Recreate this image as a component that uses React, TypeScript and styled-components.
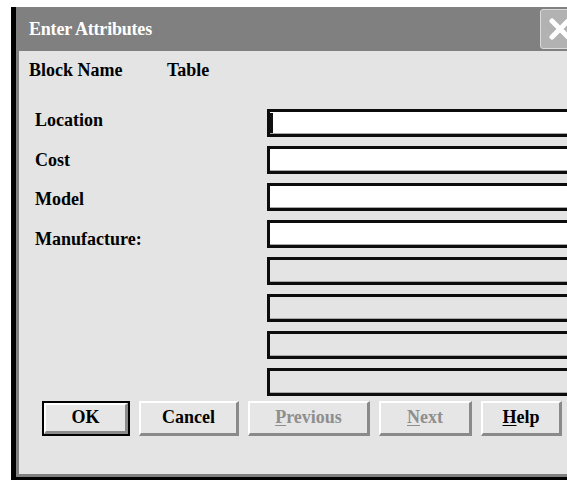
import React from "react";
import styled, { createGlobalStyle } from "styled-components";

const Global = createGlobalStyle`
  html, body {
    margin: 0;
    padding: 0;
    background: #ffffff;
    overflow: hidden;
  }
  body {
    font-family: "Liberation Serif", "Times New Roman", serif;
  }
`;

const Frame = styled.div`
  margin: 7px 0 0 11px;
  width: 600px;
  height: 473px;
  display: flex;
  flex-direction: column;
  border-left: 5px solid #000;
  border-bottom: 3px solid #000;
  box-sizing: border-box;
`;

const TitleBar = styled.div`
  height: 44px;
  flex: none;
  background: #808080;
  display: flex;
  align-items: center;
  justify-content: space-between;
  padding: 0 31px 0 13px;
`;

const TitleText = styled.span`
  color: #ffffff;
  font-weight: bold;
  font-size: 18px;
  line-height: 20px;
  letter-spacing: -0.2px;
`;

const CloseButton = styled.div`
  width: 40px;
  height: 40px;
  box-sizing: border-box;
  border: 1px solid #dadada;
  border-radius: 3px;
  background: #b2b2b2;
  display: flex;
  align-items: center;
  justify-content: center;
`;

const Body = styled.div`
  flex: 1;
  background: #e4e4e4;
  border-left: 3px solid #808080;
  border-bottom: 3px solid #808080;
  display: flex;
  flex-direction: column;
  padding: 9px 0 0 10px;
`;

const Text = styled.span`
  color: #000;
  font-weight: bold;
  font-size: 18px;
  line-height: 20px;
  white-space: nowrap;
`;

const BlockRow = styled.div`
  display: grid;
  grid-template-columns: 138px auto;
`;

const Form = styled.div`
  margin-top: 29px;
  display: grid;
  grid-template-columns: 238px 1fr;
`;

const Labels = styled.div`
  display: flex;
  flex-direction: column;
  gap: 19.6px;
  padding: 1px 0 0 6px;
`;

const Fields = styled.div`
  display: flex;
  flex-direction: column;
  gap: 9px;
`;

const Field = styled.div<{ $enabled: boolean }>`
  height: 28px;
  box-sizing: border-box;
  border: 3px solid #0c0c0c;
  box-shadow: inset 0 -1px 0 #a8a8a8;
  background: ${(p) => (p.$enabled ? "#ffffff" : "#e4e4e4")};
  display: flex;
  align-items: center;
`;

const Caret = styled.span`
  width: 3px;
  height: 20px;
  background: #111;
`;

const ButtonRow = styled.div`
  margin: 5px 0 0 13px;
  display: flex;
  gap: 9px;
`;

const Button = styled.div<{ $width: number; $default?: boolean; $disabled?: boolean }>`
  width: ${(p) => (p.$default ? p.$width - 4 : p.$width)}px;
  height: ${(p) => (p.$default ? 31 : 35)}px;
  margin: ${(p) => (p.$default ? "2px 2px 0 2px" : "0")};
  box-sizing: border-box;
  background: #e6e6e6;
  border-top: 2px solid #ffffff;
  border-left: 2px solid #ffffff;
  border-right: 3px solid #8a8a8a;
  border-bottom: 3px solid #8a8a8a;
  box-shadow: ${(p) => (p.$default ? "0 0 0 2px #000" : "none")};
  display: flex;
  align-items: center;
  justify-content: center;
  color: ${(p) => (p.$disabled ? "#8e8e8e" : "#000")};
  font-weight: bold;
  font-size: 18px;
  line-height: 20px;
  padding-bottom: 2px;
`;

const Key = styled.span`
  text-decoration: underline;
  text-underline-offset: 2px;
  text-decoration-thickness: 1px;
`;

const labels = ["Location", "Cost", "Model", "Manufacture:"];
const fieldCount = 8;

export default function App() {
  return (
    <>
      <Global />
      <Frame>
        <TitleBar>
          <TitleText>Enter Attributes</TitleText>
          <CloseButton>
            <svg width="24" height="24" viewBox="0 0 24 24">
              <path d="M4 4 L20 20 M20 4 L4 20" stroke="#ffffff" strokeWidth="5" strokeLinecap="round" />
            </svg>
          </CloseButton>
        </TitleBar>
        <Body>
          <BlockRow>
            <Text>Block Name</Text>
            <Text>Table</Text>
          </BlockRow>
          <Form>
            <Labels>
              {labels.map((l) => (
                <Text key={l}>{l}</Text>
              ))}
            </Labels>
            <Fields>
              {Array.from({ length: fieldCount }, (_, i) => (
                <Field key={i} $enabled={i < labels.length}>
                  {i === 0 && <Caret />}
                </Field>
              ))}
            </Fields>
          </Form>
          <ButtonRow>
            <Button $width={88} $default>OK</Button>
            <Button $width={100}>Cancel</Button>
            <Button $width={122} $disabled>
              <span><Key>P</Key>revious</span>
            </Button>
            <Button $width={93} $disabled>
              <span><Key>N</Key>ext</span>
            </Button>
            <Button $width={81}>
              <span><Key>H</Key>elp</span>
            </Button>
          </ButtonRow>
        </Body>
      </Frame>
    </>
  );
}
